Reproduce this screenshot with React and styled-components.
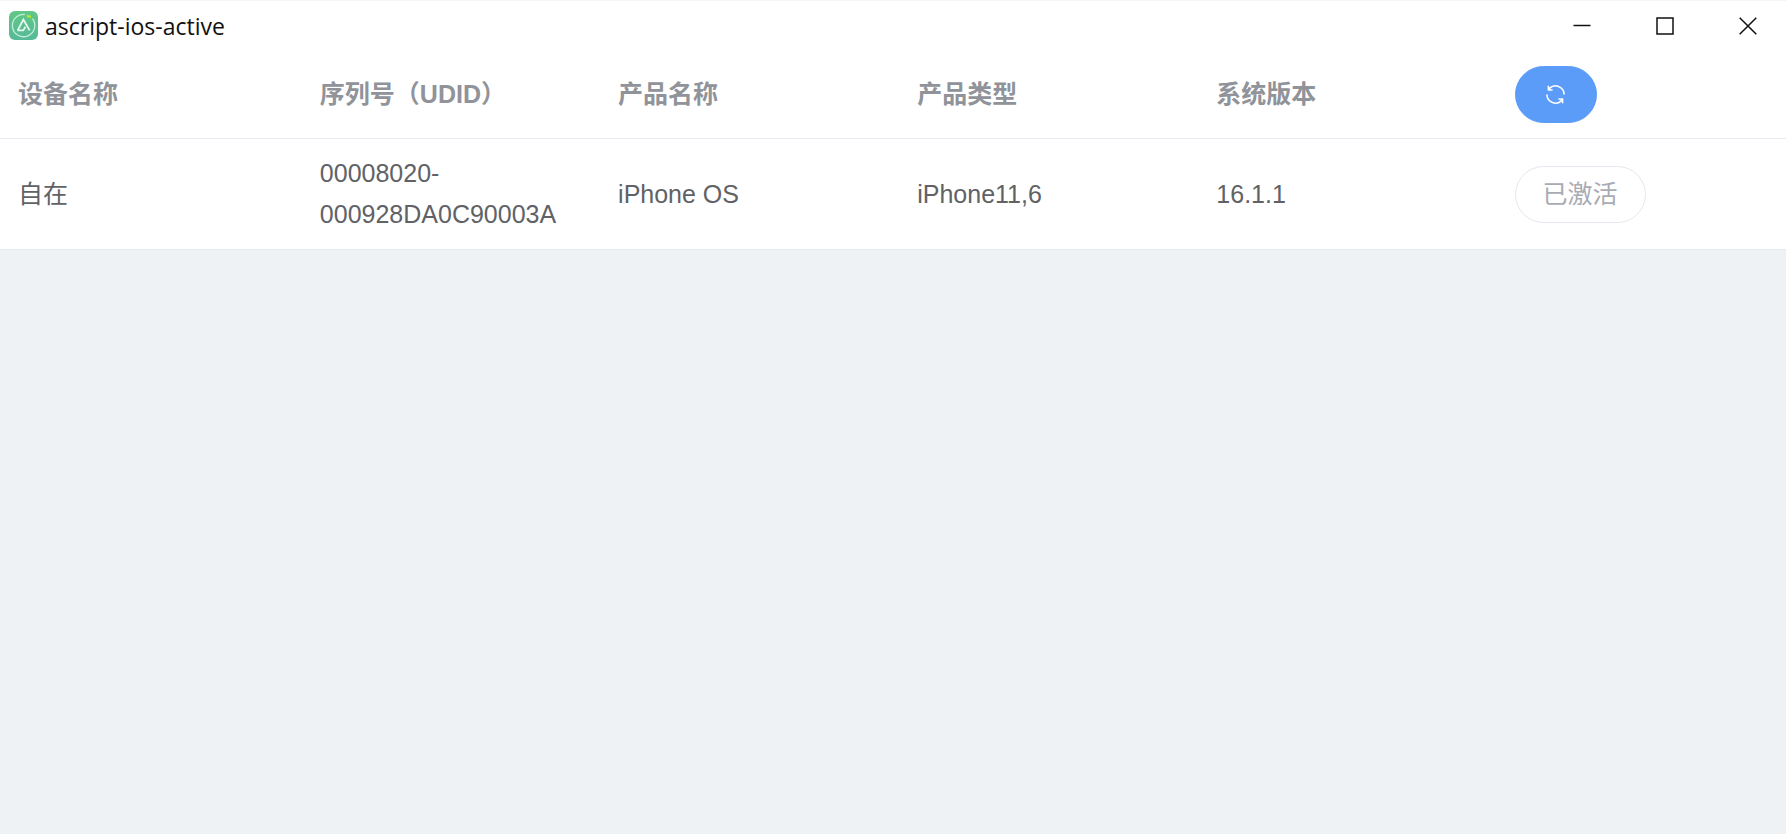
import React, { useState } from "react";
import styled, { createGlobalStyle } from "styled-components";

const columns = ["设备名称", "序列号（UDID）", "产品名称", "产品类型", "系统版本"];

const initialDevices = [
  {
    name: "自在",
    udid: "00008020-000928DA0C90003A",
    product: "iPhone OS",
    type: "iPhone11,6",
    version: "16.1.1",
    active: true,
  },
];

function Logo() {
  return (
    <svg width="29" height="29" viewBox="0 0 29 29" fill="none" aria-hidden="true">
      <defs>
        <linearGradient id="logoFill" x1="0" y1="0" x2="0" y2="1">
          <stop offset="0" stopColor="#5fc884" />
          <stop offset="1" stopColor="#56b99a" />
        </linearGradient>
      </defs>
      <rect width="29" height="29" rx="6" fill="url(#logoFill)" />
      <path
        d="M16 3.4A11.2 11.2 0 1 0 23.4 7.6"
        stroke="#c4eed8"
        strokeWidth="1.3"
      />
      <path
        d="M8.6 19.4L14.4 8.6L20.6 19.4M8.6 19.4H14.2L16.4 15.8"
        stroke="#e9faf1"
        strokeWidth="1.8"
      />
      <path d="M17.8 4L19.6 6.4M20 4.2L21.8 6.8" stroke="#b9e83c" strokeWidth="1.6" />
    </svg>
  );
}

function RefreshIcon() {
  return (
    <svg width="25" height="25" viewBox="0 0 1024 1024" fill="currentColor" aria-hidden="true">
      <path d="M771.776 794.88A384 384 0 0 1 128 512h64a320 320 0 0 0 555.712 216.448H654.72a32 32 0 1 1 0-64h149.056a32 32 0 0 1 32 32v148.928a32 32 0 1 1-64 0v-50.56zM276.288 295.616h92.992a32 32 0 0 1 0 64H220.16a32 32 0 0 1-32-32V178.56a32 32 0 0 1 64 0v50.56A384 384 0 0 1 896.128 512h-64a320 320 0 0 0-555.776-216.384z" />
    </svg>
  );
}

export default function App() {
  const [devices, setDevices] = useState(initialDevices);

  const refresh = () => {
    setDevices([...initialDevices]);
  };

  return (
    <Root>
      <GlobalStyle />
      <TitleBar>
        <Logo />
        <Title>ascript-ios-active</Title>
        <WindowButtons>
          <WindowButton type="button" aria-label="最小化">
            <svg width="18" height="18" viewBox="0 0 18 18" stroke="#111" strokeWidth="1.5">
              <path d="M0.5 8.5H17.5" />
            </svg>
          </WindowButton>
          <WindowButton type="button" aria-label="最大化">
            <svg width="18" height="18" viewBox="0 0 18 18" stroke="#111" strokeWidth="1.5" fill="none">
              <path d="M1 1H17V17H1Z" />
            </svg>
          </WindowButton>
          <WindowButton type="button" aria-label="关闭">
            <svg width="18" height="18" viewBox="0 0 18 18" stroke="#111" strokeWidth="1.5">
              <path d="M0.7 0.7L17.3 17.3M17.3 0.7L0.7 17.3" />
            </svg>
          </WindowButton>
        </WindowButtons>
      </TitleBar>
      <Table>
        <colgroup>
          <Col $width="16.9%" />
          <Col $width="16.7%" />
          <Col $width="16.75%" />
          <Col $width="16.75%" />
          <Col $width="16.7%" />
          <Col />
        </colgroup>
        <thead>
          <tr>
            {columns.map((title) => (
              <HeadCell key={title} scope="col">
                {title}
              </HeadCell>
            ))}
            <HeadCell scope="col">
              <RefreshButton type="button" aria-label="刷新" onClick={refresh}>
                <RefreshIcon />
              </RefreshButton>
            </HeadCell>
          </tr>
        </thead>
        <tbody>
          {devices.map((device) => (
            <tr key={device.udid}>
              <Cell>{device.name}</Cell>
              <Cell>{device.udid}</Cell>
              <Cell>{device.product}</Cell>
              <Cell>{device.type}</Cell>
              <Cell>{device.version}</Cell>
              <Cell>
                <ActiveButton type="button" disabled={device.active}>
                  {device.active ? "已激活" : "激活"}
                </ActiveButton>
              </Cell>
            </tr>
          ))}
        </tbody>
      </Table>
    </Root>
  );
}

const GlobalStyle = createGlobalStyle`
  * {
    box-sizing: border-box;
  }
  body {
    margin: 0;
    background-color: #eef2f5;
    font-family: "Liberation Sans", "Noto Sans CJK SC", sans-serif;
  }
`;

const Root = styled.main`
  min-height: 100vh;
  background-color: #eef2f5;
`;

const TitleBar = styled.header`
  display: flex;
  align-items: center;
  height: 50px;
  padding-left: 9px;
  background-color: white;
  border-top: 1px solid #f5f5f5;
`;

const Title = styled.h1`
  margin: 0 0 0 7px;
  color: #111;
  font-family: "Open Sans", "Noto Sans", sans-serif;
  font-size: 23px;
  font-weight: 400;
  line-height: 30px;
`;

const WindowButtons = styled.div`
  display: flex;
  gap: 7px;
  margin-left: auto;
`;

const WindowButton = styled.button`
  display: flex;
  align-items: center;
  justify-content: center;
  width: 76px;
  height: 48px;
  padding: 0;
  border: none;
  background: none;
`;

const Table = styled.table`
  width: 100%;
  table-layout: fixed;
  border-collapse: separate;
  border-spacing: 0;
  background-color: white;
  font-size: 25px;
  line-height: 41px;
`;

const Col = styled.col`
  width: ${(props) => props.$width || "auto"};
`;

const HeadCell = styled.th`
  padding: 16px 18px 15px;
  border-bottom: 1px solid #e6e9f0;
  color: #909399;
  font-weight: 700;
  text-align: left;
  vertical-align: middle;
`;

const Cell = styled.td`
  padding: 14px 18px;
  border-bottom: 1px solid #e6e9f0;
  color: #606266;
  vertical-align: middle;
`;

const RoundButton = styled.button`
  display: flex;
  align-items: center;
  justify-content: center;
  height: 57px;
  padding: 0 27px;
  border-radius: 29px;
  font-family: inherit;
  font-size: 25px;
  line-height: 25px;
`;

const RefreshButton = styled(RoundButton)`
  width: 82px;
  border: 1px solid #5a9cf8;
  background-color: #5a9cf8;
  color: white;
`;

const ActiveButton = styled(RoundButton)`
  border: 1px solid #e4e7ed;
  background-color: white;
  color: #a8abb2;
`;
